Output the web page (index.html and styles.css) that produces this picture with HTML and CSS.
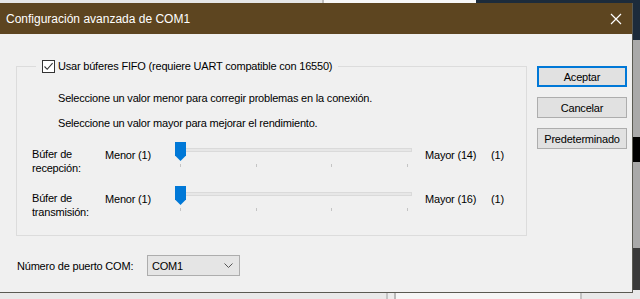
FILE: index.html
```
<!DOCTYPE html>
<html>
<head>
    <title>Configuración avanzada de COM1</title>
    <link rel="stylesheet" href="styles.css">
</head>
<body>
    <div class="ventana">
        <div class="barraTitulo">
            <span class="titulo">Configuración avanzada de COM1</span>
            <svg class="cerrar" width="12" height="12" viewBox="0 0 12 12"><path d="M1 1 L11 11 M11 1 L1 11" stroke="#fff" stroke-width="1.2" fill="none"/></svg>
        </div>
        <div class="contenido">
            <div class="principal">
                <fieldset class="grupo">
                    <legend class="fifo">
                        <span class="casilla"><svg width="11" height="11" viewBox="0 0 11 11"><path d="M1.5 5.5 L4.2 8.3 L9.6 2.2" stroke="#333" stroke-width="1.1" fill="none"/></svg></span>
                        Usar búferes FIFO (requiere UART compatible con 16550)
                    </legend>
                    <p class="aviso primero">Seleccione un valor menor para corregir problemas en la conexión.</p>
                    <p class="aviso">Seleccione un valor mayor para mejorar el rendimiento.</p>

                    <div class="fila">
                        <div class="etiqueta">Búfer de<br>recepción:</div>
                        <span class="extremo">Menor (1)</span>
                        <div class="deslizador">
                            <div class="pista"></div>
                            <svg class="cursor" width="11" height="19" viewBox="0 0 11 19"><path d="M0 0 H11 V13.5 L5.5 19 L0 13.5 Z" fill="#0078d7"/></svg>
                            <div class="marcas"><i></i><i></i><i></i><i></i></div>
                        </div>
                        <span class="extremo">Mayor (14)</span>
                        <span class="extremo">(1)</span>
                    </div>

                    <div class="fila">
                        <div class="etiqueta">Búfer de<br>transmisión:</div>
                        <span class="extremo">Menor (1)</span>
                        <div class="deslizador">
                            <div class="pista"></div>
                            <svg class="cursor" width="11" height="19" viewBox="0 0 11 19"><path d="M0 0 H11 V13.5 L5.5 19 L0 13.5 Z" fill="#0078d7"/></svg>
                            <div class="marcas"><i></i><i></i><i></i><i></i></div>
                        </div>
                        <span class="extremo">Mayor (16)</span>
                        <span class="extremo">(1)</span>
                    </div>
                </fieldset>

                <div class="puerto">
                    <span>Número de puerto COM:</span>
                    <div class="combo">
                        <span>COM1</span>
                        <svg width="9" height="5" viewBox="0 0 9 5"><path d="M0.5 0.5 L4.5 4.5 L8.5 0.5" stroke="#555" stroke-width="1" fill="none"/></svg>
                    </div>
                </div>
            </div>

            <div class="botones">
                <button class="boton defecto">Aceptar</button>
                <button class="boton">Cancelar</button>
                <button class="boton">Predeterminado</button>
            </div>
        </div>
    </div>
</body>
</html>
```

FILE: styles.css
```
body {
    margin: 0;
    width: 640px;
    height: 299px;
    overflow: hidden;
    padding-top: 3px;
    box-sizing: border-box;
    font-family: "Liberation Sans", Arial, sans-serif;
    font-size: 11px;
    letter-spacing: -0.2px;
    color: #000;
    background:
        linear-gradient(to right, transparent 633px, #1c2b3b 633px) 0 0 / 640px 40px no-repeat,
        linear-gradient(to right, transparent 633px, #000 633px) 0 137px / 640px 25px no-repeat,
        linear-gradient(to right, transparent 633px, #3a3a3a 633px) 0 248px / 640px 42px no-repeat,
        linear-gradient(to right, transparent 633px, #a9a9a9 633px) 0 40px / 640px 210px no-repeat,
        linear-gradient(to right, #e6e6e6 322px, #bdbdbd 322px, #bdbdbd 324px, #f7f7f7 324px, #f7f7f7 476px, #1c2b3b 476px) 0 0 / 640px 3px no-repeat,
        linear-gradient(to right, #e9e9e9 386px, #c4c4c4 386px, #c4c4c4 388px, #ececec 388px, #ececec 394px, #b9b9b9 394px, #b9b9b9 396px, #f6f6f6 396px, #f6f6f6 580px, #c4c4c4 580px, #c4c4c4 582px, #e9e9e9 582px) 0 293px / 640px 6px no-repeat,
        #e9e9e9;
}

.ventana {
    width: 633px;
    height: 290px;
    box-sizing: border-box;
    border-right: 1px solid #5a5a52;
    border-bottom: 1px solid #5a5a52;
    background-color: #f0f0f0;
    display: flex;
    flex-direction: column;
}

.barraTitulo {
    height: 31px;
    background-color: #5d4520;
    color: white;
    display: flex;
    align-items: center;
    justify-content: space-between;
    padding: 0 10px 0 6px;
    flex-shrink: 0;
}

.titulo {
    font-size: 12px;
    letter-spacing: 0;
    margin-top: 1px;
}

.contenido {
    display: flex;
    gap: 10px;
    padding: 25px 0 0 16px;
}

.principal {
    width: 511px;
}

.grupo {
    margin: 0;
    padding: 0 0 10px 0;
    border: 1px solid #dcdcdc;
    height: 177px;
    box-sizing: border-box;
}

.fifo {
    margin-left: 19px;
    padding: 0 6px;
    display: flex;
    align-items: center;
    gap: 3px;
    line-height: 14px;
}

.casilla {
    width: 11px;
    height: 11px;
    border: 1px solid #333;
    background-color: #fff;
    display: flex;
}

.aviso {
    margin: 10px 0 0 41px;
    line-height: 15px;
}

.aviso.primero {
    margin-top: 18px;
}

.fila {
    display: grid;
    grid-template-columns: 73px 70px 250px 66px auto;
    align-items: start;
    margin-left: 15px;
    height: 44px;
    white-space: nowrap;
}

.aviso + .fila {
    margin-top: 11px;
}

.etiqueta {
    line-height: 14px;
    margin-top: 5px;
}

.extremo {
    margin-top: 6px;
    line-height: 15px;
}

.deslizador {
    width: 240px;
    height: 26px;
    position: relative;
}

.pista {
    margin: 6px 3px 0 5px;
    height: 2px;
    border: 1px solid #dadada;
    background-color: #e7e7e7;
}

.cursor {
    position: absolute;
    left: 0;
    top: 0;
}

.marcas {
    display: flex;
    justify-content: space-between;
    margin: 12px 7px 0 5px;
}

.marcas i {
    width: 1px;
    height: 3px;
    background-color: #c4c4c4;
}

.puerto {
    display: flex;
    align-items: center;
    margin: 19px 0 0 1px;
    white-space: nowrap;
}

.puerto > span {
    width: 130px;
}

.combo {
    width: 93px;
    height: 21px;
    box-sizing: border-box;
    border: 1px solid #adadad;
    background-color: #e5e5e5;
    display: flex;
    align-items: center;
    justify-content: space-between;
    padding: 0 6px 0 4px;
}

.botones {
    display: flex;
    flex-direction: column;
    gap: 10px;
    padding-top: 7px;
}

.boton {
    width: 90px;
    height: 21px;
    box-sizing: border-box;
    border: 1px solid #adadad;
    background-color: #e1e1e1;
    font-family: inherit;
    font-size: 11px;
    letter-spacing: -0.2px;
    color: #000;
    padding: 0;
}

.boton.defecto {
    border: 2px solid #0078d7;
}
```
